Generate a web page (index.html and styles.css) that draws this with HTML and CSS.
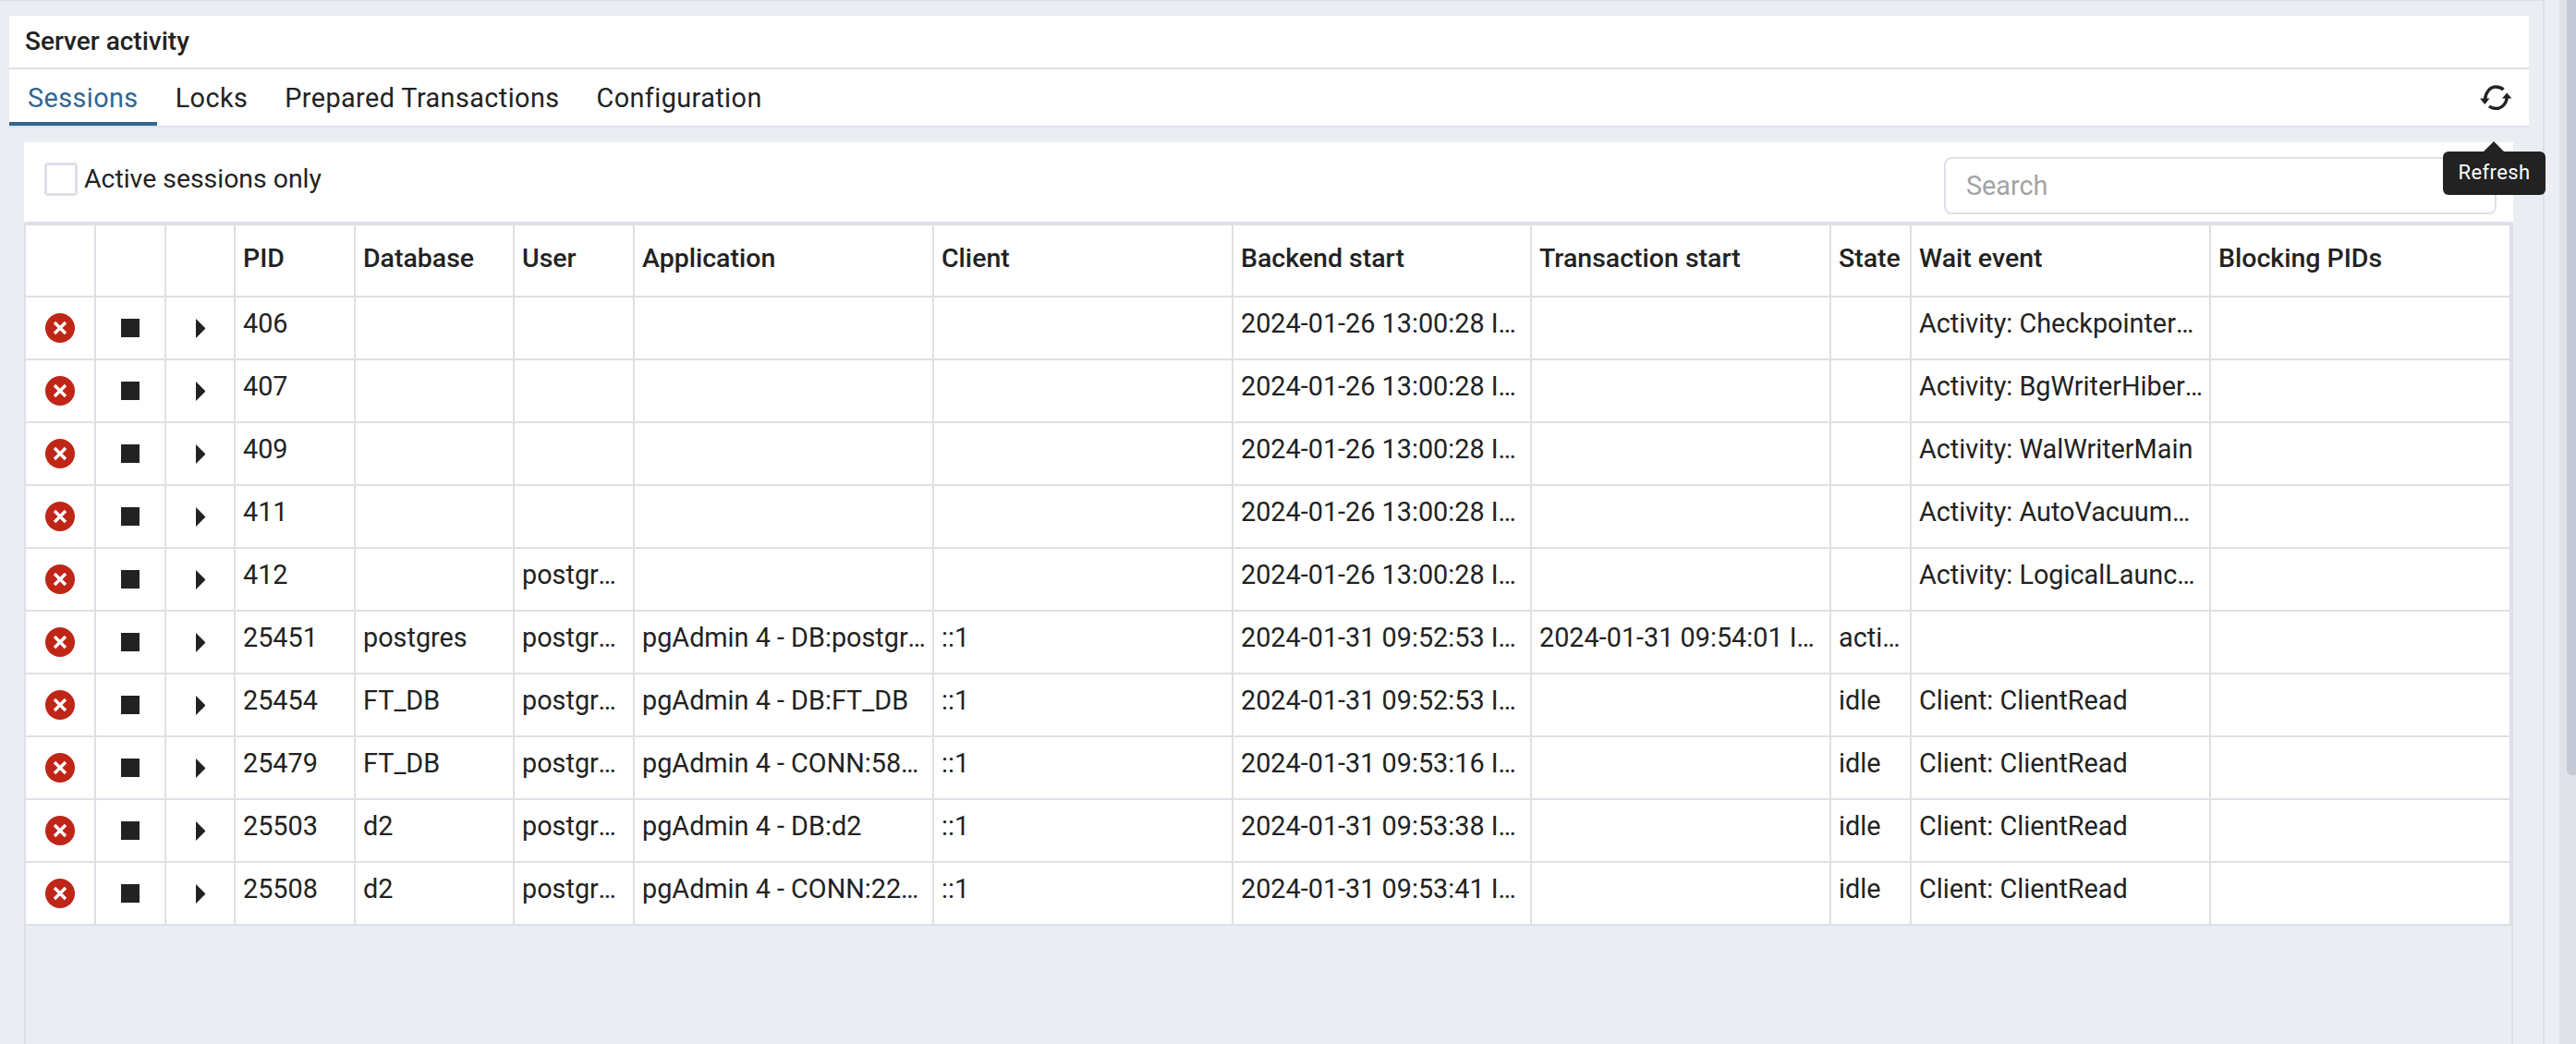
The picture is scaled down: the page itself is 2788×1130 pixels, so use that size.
FILE: index.html
```html
<!DOCTYPE html>
<html lang="en">
<head>
<meta charset="utf-8">
<title>Server activity</title>
<link rel="stylesheet" href="styles.css">
</head>
<body>
<svg class="defs" width="0" height="0" aria-hidden="true">
  <symbol id="i-close" viewBox="0 0 32 32"><circle cx="16" cy="16" r="16" fill="#bf2617"/><path d="M10 10l12 12M22 10L10 22" stroke="#fff" stroke-width="3.4" fill="none"/></symbol>
  <symbol id="i-stop" viewBox="0 0 20 20"><rect width="20" height="20" fill="#222"/></symbol>
  <symbol id="i-caret" viewBox="0 0 10 21"><path d="M0 0l10.500 10.500L0 21z" fill="#222"/></symbol>
</svg>
<div class="content">
  <header class="title">Server activity</header>
  <nav class="tabs">
    <a class="tab tab-active">Sessions</a>
    <a class="tab">Locks</a>
    <a class="tab">Prepared Transactions</a>
    <a class="tab">Configuration</a>
    <button class="refresh" aria-label="Refresh">
      <svg width="35" height="27" viewBox="0 0 35 27"><path d="M5.500 16C6 8 11 2 17 2c3.500 0 6.500 1 8.500 3M29.500 12c-.5 8-5.500 13.500-11.500 13.500-3 0-6-1-8-2.500" fill="none" stroke="#222" stroke-width="3.400"/><path d="M0 14.500h10.500L5.300 21zM24 14.500h10.500L29.200 8.500z" fill="#222"/></svg>
    </button>
  </nav>
  <section class="panel">
    <div class="toolbar">
      <label class="check"><span class="box"></span>Active sessions only</label>
      <input class="search" type="text" placeholder="Search">
    </div>
    <div class="grid">
      <table class="sessions">
        <colgroup><col class="w76"><col class="w76"><col class="w75"><col class="w130"><col class="w172"><col class="w130"><col class="w324"><col class="w324"><col class="w323"><col class="w324"><col class="w87"><col class="w324"><col class="w325"></colgroup>
        <thead><tr><th></th><th></th><th></th><th>PID</th><th>Database</th><th>User</th><th>Application</th><th>Client</th><th>Backend start</th><th>Transaction start</th><th>State</th><th>Wait event</th><th>Blocking PIDs</th></tr></thead>
        <tbody>
          <tr><td class="ic"><svg class="close"><use href="#i-close"/></svg></td><td class="ic"><svg class="stop"><use href="#i-stop"/></svg></td><td class="ic"><svg class="caret"><use href="#i-caret"/></svg></td><td>406</td><td></td><td></td><td></td><td></td><td>2024-01-26 13:00:28 India Standard Time</td><td></td><td></td><td>Activity: CheckpointerMain</td><td></td></tr>
          <tr><td class="ic"><svg class="close"><use href="#i-close"/></svg></td><td class="ic"><svg class="stop"><use href="#i-stop"/></svg></td><td class="ic"><svg class="caret"><use href="#i-caret"/></svg></td><td>407</td><td></td><td></td><td></td><td></td><td>2024-01-26 13:00:28 India Standard Time</td><td></td><td></td><td>Activity: BgWriterHibernate</td><td></td></tr>
          <tr><td class="ic"><svg class="close"><use href="#i-close"/></svg></td><td class="ic"><svg class="stop"><use href="#i-stop"/></svg></td><td class="ic"><svg class="caret"><use href="#i-caret"/></svg></td><td>409</td><td></td><td></td><td></td><td></td><td>2024-01-26 13:00:28 India Standard Time</td><td></td><td></td><td>Activity: WalWriterMain</td><td></td></tr>
          <tr><td class="ic"><svg class="close"><use href="#i-close"/></svg></td><td class="ic"><svg class="stop"><use href="#i-stop"/></svg></td><td class="ic"><svg class="caret"><use href="#i-caret"/></svg></td><td>411</td><td></td><td></td><td></td><td></td><td>2024-01-26 13:00:28 India Standard Time</td><td></td><td></td><td>Activity: AutoVacuumMain</td><td></td></tr>
          <tr><td class="ic"><svg class="close"><use href="#i-close"/></svg></td><td class="ic"><svg class="stop"><use href="#i-stop"/></svg></td><td class="ic"><svg class="caret"><use href="#i-caret"/></svg></td><td>412</td><td></td><td class="user">postgres</td><td></td><td></td><td>2024-01-26 13:00:28 India Standard Time</td><td></td><td></td><td>Activity: LogicalLauncherMain</td><td></td></tr>
          <tr><td class="ic"><svg class="close"><use href="#i-close"/></svg></td><td class="ic"><svg class="stop"><use href="#i-stop"/></svg></td><td class="ic"><svg class="caret"><use href="#i-caret"/></svg></td><td>25451</td><td>postgres</td><td class="user">postgres</td><td>pgAdmin 4 - DB:postgres</td><td>::1</td><td>2024-01-31 09:52:53 India Standard Time</td><td>2024-01-31 09:54:01 India Standard Time</td><td>active</td><td></td><td></td></tr>
          <tr><td class="ic"><svg class="close"><use href="#i-close"/></svg></td><td class="ic"><svg class="stop"><use href="#i-stop"/></svg></td><td class="ic"><svg class="caret"><use href="#i-caret"/></svg></td><td>25454</td><td>FT_DB</td><td class="user">postgres</td><td>pgAdmin 4 - DB:FT_DB</td><td>::1</td><td>2024-01-31 09:52:53 India Standard Time</td><td></td><td>idle</td><td>Client: ClientRead</td><td></td></tr>
          <tr><td class="ic"><svg class="close"><use href="#i-close"/></svg></td><td class="ic"><svg class="stop"><use href="#i-stop"/></svg></td><td class="ic"><svg class="caret"><use href="#i-caret"/></svg></td><td>25479</td><td>FT_DB</td><td class="user">postgres</td><td>pgAdmin 4 - CONN:5812345</td><td>::1</td><td>2024-01-31 09:53:16 India Standard Time</td><td></td><td>idle</td><td>Client: ClientRead</td><td></td></tr>
          <tr><td class="ic"><svg class="close"><use href="#i-close"/></svg></td><td class="ic"><svg class="stop"><use href="#i-stop"/></svg></td><td class="ic"><svg class="caret"><use href="#i-caret"/></svg></td><td>25503</td><td>d2</td><td class="user">postgres</td><td>pgAdmin 4 - DB:d2</td><td>::1</td><td>2024-01-31 09:53:38 India Standard Time</td><td></td><td>idle</td><td>Client: ClientRead</td><td></td></tr>
          <tr><td class="ic"><svg class="close"><use href="#i-close"/></svg></td><td class="ic"><svg class="stop"><use href="#i-stop"/></svg></td><td class="ic"><svg class="caret"><use href="#i-caret"/></svg></td><td>25508</td><td>d2</td><td class="user">postgres</td><td>pgAdmin 4 - CONN:2212345</td><td>::1</td><td>2024-01-31 09:53:41 India Standard Time</td><td></td><td>idle</td><td>Client: ClientRead</td><td></td></tr>
        </tbody>
      </table>
    </div>
  </section>
  <div class="tooltip">Refresh</div>
</div>
<div class="gutter"></div>
<div class="scrollbar"><div class="thumb"></div></div>
</body>
</html>
```
FILE: styles.css
```css
* { box-sizing: border-box; }
html, body { height: 100%; }
body {
  margin: 0;
  display: flex;
  height: 1130px;
  overflow: hidden;
  background: #eaedf2;
  color: #222;
  font-family: Roboto, "Liberation Sans", sans-serif;
  font-size: 28.8px;
}
.defs { position: absolute; }
.content {
  position: relative;
  width: 2754px;
  flex: none;
  display: flex;
  flex-direction: column;
  padding: 16px 15px 0 10px;
  border-top: 1px solid #dde0e6;
  border-right: 2px solid #dde0e6;
}
.title {
  height: 58px;
  padding: 0 17px;
  background: #fff;
  border-bottom: 2px solid #dde0e6;
  font-size: 28px;
  font-weight: 500;
  line-height: 56px;
}
.tabs {
  display: flex;
  height: 63px;
  background: #fff;
  border-bottom: 2px solid #dde0e6;
}
.tab {
  padding: 0 20px;
  height: 61px;
  line-height: 62px;
  letter-spacing: 0.42px;
}
.tab-active {
  color: #326690;
  border-bottom: 4px solid #326690;
}
.refresh {
  margin-left: auto;
  margin-right: 18px;
  padding: 0;
  width: 35px;
  height: 61px;
  display: flex;
  align-items: center;
  border: 0;
  background: none;
}
.panel {
  flex: 1;
  display: flex;
  flex-direction: column;
  margin: 16px 17px 0 16px;
}
.toolbar {
  display: flex;
  justify-content: space-between;
  align-items: flex-start;
  height: 86px;
  padding: 16px 18px 0 22px;
  background: #fff;
}
.check {
  display: flex;
  align-items: center;
  gap: 7px;
  margin-top: 6px;
  font-size: 28.4px;
  line-height: 36px;
}
.box {
  width: 36px;
  height: 36px;
  border: 3px solid #dde0e6;
  border-radius: 4px;
  background: #fff;
}
.search {
  width: 598px;
  height: 62px;
  padding: 0 22px;
  border: 2px solid #dde0e6;
  border-radius: 8px;
  background: #fff;
  font: inherit;
  color: #222;
}
.search::placeholder { color: #a3a3a3; opacity: 1; }
.grid {
  flex: 1;
  border: 2px solid #dde0e6;
  border-bottom: 0;
  border-radius: 4px 4px 0 0;
}
.sessions {
  width: 2690px;
  table-layout: fixed;
  border-collapse: separate;
  border-spacing: 0;
  background: #fff;
}
.w75 { width: 75px; } .w76 { width: 76px; } .w87 { width: 87px; }
.w130 { width: 130px; } .w172 { width: 172px; }
.w323 { width: 323px; } .w324 { width: 324px; } .w325 { width: 325px; }
th, td {
  padding: 9px 5px 0 8px;
  border-right: 2px solid #dde0e6;
  border-bottom: 2px solid #dde0e6;
  vertical-align: top;
  text-align: left;
  white-space: nowrap;
  overflow: hidden;
  text-overflow: ellipsis;
  line-height: 38px;
  font-weight: 400;
}
th {
  height: 80px;
  padding-top: 17px;
  border-top: 2px solid #dde0e6;
  font-size: 28.5px;
  font-weight: 500;
}
td { height: 68px; }
td.user { padding-right: 12px; }
td.ic { padding: 0; vertical-align: middle; text-align: center; }
.ic svg { display: block; margin: 0 auto; }
.close { width: 32px; height: 32px; }
.stop { width: 20px; height: 20px; }
.caret { width: 10px; height: 21px; }
.tooltip {
  position: absolute;
  left: 2644px;
  top: 163px;
  width: 111px;
  height: 47px;
  border-radius: 6px;
  background: #222;
  color: #fff;
  font-size: 22px;
  letter-spacing: 0.4px;
  line-height: 46px;
  text-align: center;
}
.tooltip::before {
  content: "";
  position: absolute;
  left: 44px;
  top: -11px;
  border-left: 11px solid transparent;
  border-right: 11px solid transparent;
  border-bottom: 11px solid #222;
}
.gutter { width: 16px; flex: none; background: #eceef3; }
.scrollbar { flex: 1; display: flex; justify-content: flex-end; background: #e0e2e8; }
.thumb { width: 10px; height: 839px; background: #c6c9d6; border-bottom-left-radius: 6px; }
```
